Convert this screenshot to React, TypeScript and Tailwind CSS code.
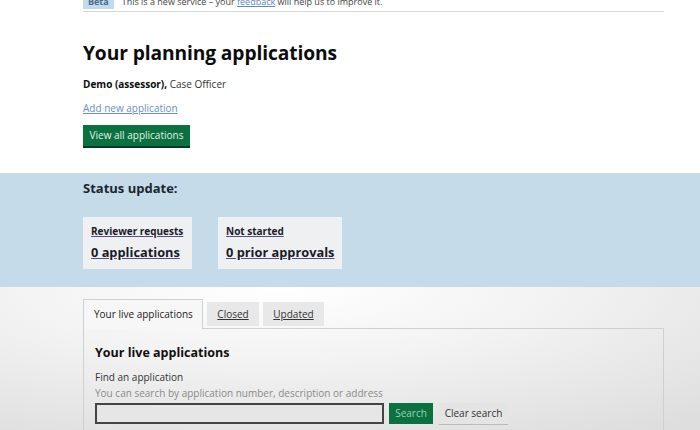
export default function App() {
  return (
    <div className="w-[700px] h-[430px] overflow-hidden bg-white text-[#0b0c0c]" style={{ fontFamily: '"Open Sans", "Noto Sans", sans-serif' }}>
      <div className="px-[83px]">
        <div className="mt-[-8px] h-[20px] flex items-center gap-[8px] border-b border-[#d6d8da] w-[581px]">
          <span className="bg-[#c5d9ee] text-[#4a6a90] text-[9px] font-bold px-[5px] leading-[14px]">Beta</span>
          <span className="text-[9px] text-[#444]">This is a new service – your <span className="text-[#5b8ac0] underline">feedback</span> will help us to improve it.</span>
        </div>
        <h1 className="mt-[28px] text-[19.2px] font-bold leading-[26px] tracking-[-0.1px]">Your planning applications</h1>
        <div className="mt-[11px] text-[10px] leading-[14px]"><b>Demo (assessor),</b> <span className="text-[#333]">Case Officer</span></div>
        <div className="mt-[10px] text-[10px] leading-[14px]"><a className="text-[#6a8fbf] underline">Add new application</a></div>
        <div className="mt-[10px] w-[107px] h-[21px] bg-[#0b7140] text-[#e6f0ea] text-[10px] flex items-center justify-center shadow-[0_2px_0_#003a1f]">View all applications</div>
      </div>
      <div className="mt-[27px] h-[114px] bg-[#c6dbe9] px-[83px] pt-[6px]">
        <div className="text-[13px] font-bold leading-[18px] text-[#1a2630]">Status update:</div>
        <div className="mt-[20px] flex gap-[26px]">
          <div className="w-[109px] h-[52px] bg-[#eef0f1] px-[8px] pt-[7px]">
            <div className="text-[10px] font-bold underline leading-[14px] text-[#1a1a2a] decoration-[#5b4a8a] whitespace-nowrap">Reviewer requests</div>
            <div className="mt-[5px] text-[12.8px] font-bold underline leading-[18px] text-[#1a1a2a] decoration-[#5b4a8a] whitespace-nowrap">0 applications</div>
          </div>
          <div className="w-[124px] h-[52px] bg-[#eef0f1] px-[8px] pt-[7px]">
            <div className="text-[10px] font-bold underline leading-[14px] text-[#1a1a2a] decoration-[#5b4a8a] whitespace-nowrap">Not started</div>
            <div className="mt-[5px] text-[12.8px] font-bold underline leading-[18px] text-[#1a1a2a] decoration-[#5b4a8a] whitespace-nowrap">0 prior approvals</div>
          </div>
        </div>
      </div>
      <div className="h-[143px] px-[83px] pt-[11px]" style={{ background: 'radial-gradient(ellipse 90% 120% at 40% 0%, #ffffff 0%, #f2f2f2 45%, #dedede 100%)' }}>
        <div className="flex items-end gap-[4px] h-[30px]">
          <div className="w-[120px] h-[30px] border border-[#d0d0d0] border-b-0 bg-[#f7f7f7] relative z-10 mb-[-1px] text-[10px] text-[#222] flex items-center pl-[10px]">Your live applications</div>
          <div className="w-[52px] h-[24px] bg-[#e8e8e8] text-[10px] underline text-[#333] flex items-center justify-center mb-[2px]">Closed</div>
          <div className="w-[61px] h-[24px] bg-[#e8e8e8] text-[10px] underline text-[#333] flex items-center justify-center mb-[2px]">Updated</div>
        </div>
        <div className="w-[581px] h-[120px] border border-[#d0d0d0] px-[11px] pt-[15px]">
          <div className="text-[12.5px] font-bold leading-[18px] text-[#111]">Your live applications</div>
          <div className="mt-[8px] text-[10px] leading-[14px] text-[#333]">Find an application</div>
          <div className="mt-[2px] text-[10px] leading-[14px] text-[#8a8a8a]">You can search by application number, description or address</div>
          <div className="mt-[3px] flex gap-[5px]">
            <div className="w-[289px] h-[21px] border-2 border-[#444] bg-[#e6e6e6]"></div>
            <div className="w-[44px] h-[21px] bg-[#0b7140] text-[#9fcfb0] text-[10px] flex items-center justify-center">Search</div>
            <div className="ml-[1px] w-[69px] h-[21px] bg-[#e4e4e4] text-[#333] text-[10px] flex items-center justify-center shadow-[0_1px_0_#bbb]">Clear search</div>
          </div>
        </div>
      </div>
    </div>
  );
}
